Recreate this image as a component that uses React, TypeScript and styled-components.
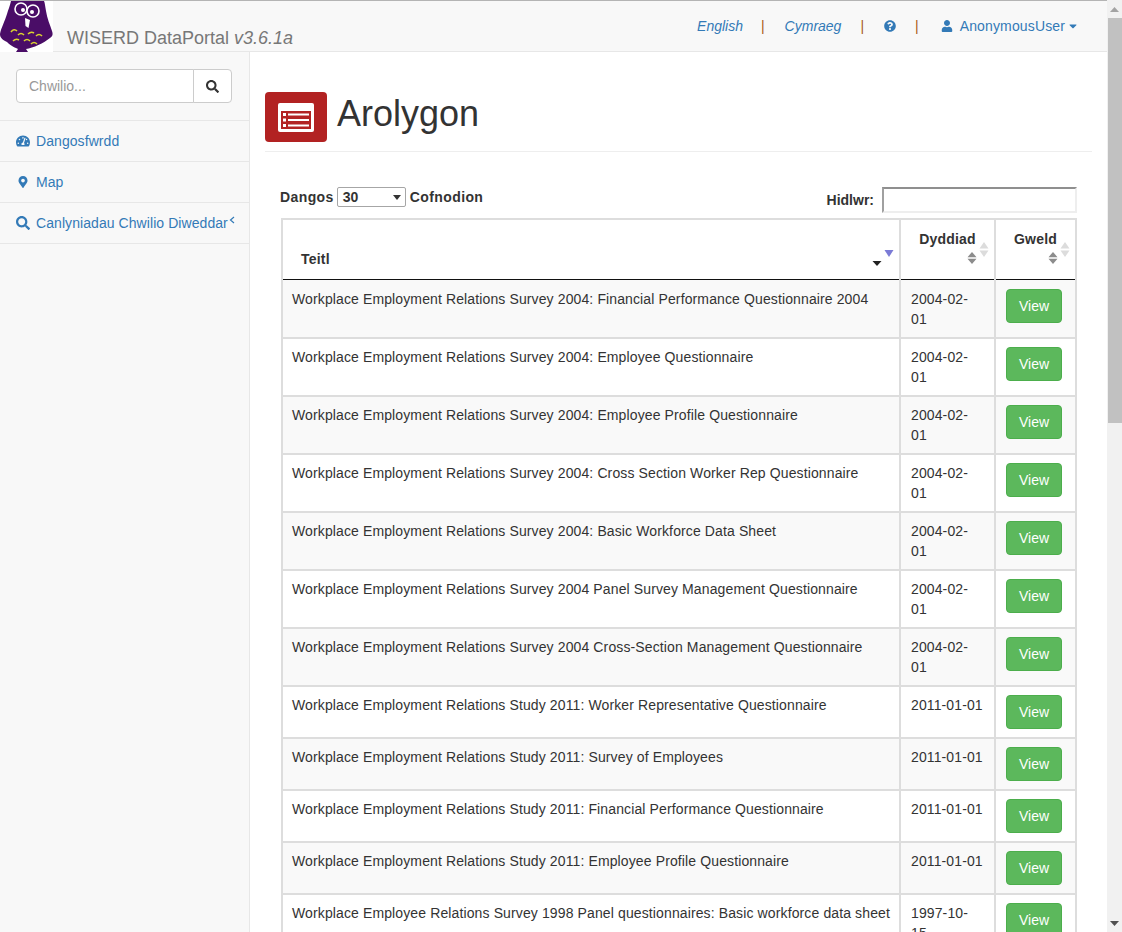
import * as React from 'react'
import styled, { createGlobalStyle } from 'styled-components'
import {
  FaCaretDown,
  FaMapMarkerAlt,
  FaQuestionCircle,
  FaSearch,
  FaTachometerAlt,
  FaUser,
} from 'react-icons/fa'

const GlobalStyle = createGlobalStyle`
  * { box-sizing: border-box; }
  html, body { margin: 0; padding: 0; height: 100%; overflow: hidden; background: #fff; }
  body {
    font-family: 'Liberation Sans', Arial, sans-serif;
    font-size: 14px;
    line-height: 20px;
    color: #333;
  }
`

const Viewport = styled.div`
  display: flex;
  height: 932px;
  width: 1122px;
  overflow: hidden;
`

const Page = styled.div`
  flex: 1;
  min-width: 0;
  display: flex;
  flex-direction: column;
`

const Navbar = styled.header`
  flex: none;
  display: flex;
  align-items: flex-start;
  height: 52px;
  background: #f8f8f8;
  border-top: 1px solid #b4b4b4;
  border-bottom: 1px solid #e7e7e7;
`

const Brand = styled.div`
  display: flex;
  align-items: flex-start;
`

const BrandTitle = styled.span`
  margin: 27px 0 0 14px;
  font-size: 18px;
  line-height: 20px;
  color: #777;

  em {
    font-style: italic;
  }
`

const NavLinks = styled.nav`
  margin-left: auto;
  display: flex;
  align-items: center;
  height: 50px;
  padding-right: 28px;
  color: #337ab7;
`

const LangLink = styled.a`
  font-style: italic;
  color: #337ab7;
`

const Divider = styled.span`
  margin: ${props => props.$margin};
  color: #a85a1a;
`

const HelpIcon = styled(FaQuestionCircle)`
  width: 12px;
  height: 12px;
`

const UserLink = styled.a`
  display: flex;
  align-items: center;
  gap: 7px;
  color: #337ab7;
  letter-spacing: 0.14px;

  svg:last-child {
    margin-left: -5px;
  }
`

const Body = styled.div`
  flex: 1;
  min-height: 0;
  display: flex;
`

const Sidebar = styled.aside`
  flex: none;
  width: 250px;
  background: #f8f8f8;
  border-right: 1px solid #e7e7e7;
`

const SearchBox = styled.div`
  display: flex;
  height: 69px;
  padding: 17px 17px 18px 16px;
  border-bottom: 1px solid #e7e7e7;
`

const SearchInput = styled.div`
  flex: 1;
  height: 34px;
  padding: 6px 12px;
  background: #fff;
  border: 1px solid #ccc;
  border-radius: 4px 0 0 4px;
  color: #999;
`

const SearchButton = styled.div`
  flex: none;
  display: flex;
  align-items: center;
  justify-content: center;
  width: 39px;
  height: 34px;
  margin-left: -1px;
  background: #fff;
  border: 1px solid #ccc;
  border-radius: 0 4px 4px 0;
  color: #333;

  svg {
    width: 13px;
    height: 13px;
  }
`

const SideItem = styled.a`
  display: flex;
  align-items: center;
  height: 41px;
  padding-left: 16px;
  border-bottom: 1px solid #e7e7e7;
  color: #337ab7;
  white-space: nowrap;
  letter-spacing: 0.07px;
`

const SideIcon = styled.span`
  flex: none;
  display: flex;
  justify-content: center;
  width: 14px;
  margin-right: 6px;

  svg {
    width: ${props => props.$size || 14}px;
    height: ${props => props.$size || 14}px;
  }
`

const Chevron = styled.svg`
  flex: none;
  align-self: flex-start;
  width: 6px;
  height: 8px;
  margin: 13px 0 0 1px;
`

const Main = styled.main`
  flex: 1;
  min-width: 0;
  padding: 40px 15px 0 15px;
`

const PageHeader = styled.div`
  display: flex;
  align-items: flex-start;
  height: 60px;
  border-bottom: 1px solid #eee;
`

const HeaderIcon = styled.div`
  flex: none;
  display: flex;
  align-items: center;
  justify-content: center;
  width: 62px;
  height: 50px;
  background: #b22222;
  border-radius: 4px;
`

const PageTitle = styled.h1`
  margin: 0 0 0 10px;
  font-size: 36px;
  font-weight: 500;
  line-height: 44px;
  color: #333;
`

const TableControls = styled.div`
  display: flex;
  align-items: flex-end;
  justify-content: space-between;
  height: 66px;
  margin: 0 15px 0 15px;
  padding-bottom: 5px;
  font-weight: bold;
  letter-spacing: 0.4px;
`

const LengthControl = styled.label`
  display: flex;
  align-items: center;
  gap: 4px;
  margin-bottom: 6px;
`

const LengthSelect = styled.span`
  display: flex;
  align-items: center;
  justify-content: space-between;
  width: 69px;
  height: 20px;
  margin-left: -1px;
  padding: 0 4px 0 5px;
  background: #fff;
  border: 1px solid #a6a6a6;
  border-radius: 2px;
  letter-spacing: 0;
`

const SelectArrow = styled.svg`
  width: 8px;
  height: 5px;
`

const FilterControl = styled.label`
  display: flex;
  align-items: center;
  gap: 8px;
  letter-spacing: 0;
`

const FilterInput = styled.span`
  display: block;
  width: 195px;
  height: 26px;
  background: #fff;
  border: 2px solid;
  border-color: #8f8f8f #eee #eee #a0a0a0;
`

const TableWrap = styled.div`
  margin: 0 15px 0 16px;
`

const DataTable = styled.table`
  width: 795px;
  border-collapse: collapse;
  table-layout: fixed;
  border-top: 2px solid #ddd;
`

const HeadCell = styled.th`
  position: relative;
  height: 60px;
  padding: ${props => (props.$bottom ? '8px 10px 10px 18px' : '9px 10px 0')};
  border: 2px solid #ddd;
  border-bottom: 1px solid #111;
  vertical-align: ${props => (props.$bottom ? 'bottom' : 'top')};
  text-align: ${props => (props.$bottom ? 'left' : 'center')};
  font-weight: bold;
  letter-spacing: 0.2px;
  color: #333;
`

const SortMark = styled.svg`
  position: absolute;
  right: ${props => props.$right}px;
  top: ${props => props.$top}px;
  width: 10px;
  height: ${props => props.$height}px;
`

const Row = styled.tr`
  background: ${props => (props.$striped ? '#f9f9f9' : '#fff')};

  &:first-child td {
    border-top: 1px solid #111;
    padding-top: 9px;
  }
`

const Cell = styled.td`
  padding: 8px 10px;
  border: 2px solid #ddd;
  vertical-align: top;
  line-height: 20px;
  letter-spacing: 0.12px;
  color: #333;
`

const TitleCell = styled(Cell)`
  padding-left: 9px;
  white-space: nowrap;
`

const DateCell = styled(Cell)`
  white-space: pre;
`

const ViewButton = styled.a`
  display: block;
  width: 56px;
  height: 34px;
  line-height: 32px;
  letter-spacing: 0;
  text-align: center;
  background: #5cb85c;
  border: 1px solid #4cae4c;
  border-radius: 4px;
  color: #fff;
`

const Scrollbar = styled.div`
  flex: none;
  display: flex;
  flex-direction: column;
  width: 15px;
  height: 100%;
  background: #f1f1f1;
`

const ScrollArrow = styled.div`
  flex: none;
  display: flex;
  align-items: center;
  justify-content: center;
  height: 18px;

  svg {
    width: 9px;
    height: 5px;
  }
`

const ScrollTrack = styled.div`
  flex: 1;
  min-height: 0;
`

const ScrollThumb = styled.div`
  height: 405px;
  margin-left: 1px;
  background: #c1c1c1;
`

const OwlSvg = styled.svg`
  display: block;
  background: #fff;
`

const Owl: React.FC = () => (
  <OwlSvg width="53" height="51" viewBox="0 0 53 51">
    <path
      d="M11 0 C10 5 8 9 7 13 C5 20 1 27 0 33 C0 37 3 39 7 41 C11 45 16 47 18 48 L16 51 L28 51 L26 48 C33 47 44 42 50 37 C53 35 53 33 52 30 C50 24 47 17 46 10 C45 5 45 2 44 0 Z"
      fill="#4a0d67"
    />
    <circle cx="21" cy="8" r="6" fill="#4a0d67" stroke="#fff" strokeWidth="1.6" />
    <circle cx="33" cy="10" r="6" fill="#4a0d67" stroke="#fff" strokeWidth="1.6" />
    <circle cx="23" cy="9" r="2" fill="#fff" />
    <circle cx="32" cy="11" r="2" fill="#fff" />
    <path d="M25 17 L30 19 L28.5 27 L25.5 25 Z" fill="#fff" />
    <g fill="none" stroke="#d9d22f" strokeWidth="1.6">
      <path d="M11 31 Q14 27 17 30" />
      <path d="M18 34 Q21 31 24 34" />
      <path d="M28 33 Q31 30 34 32" />
      <path d="M36 35 Q39 32 42 35" />
      <path d="M13 40 Q16 37 19 39" />
      <path d="M24 40 Q27 37 30 40" />
      <path d="M31 43 Q34 40 37 43" />
    </g>
  </OwlSvg>
)

const ListAlt: React.FC = () => (
  <svg width="36" height="29" viewBox="0 0 36 29">
    <rect width="36" height="29" rx="2" fill="#fff" />
    <rect x="3" y="8" width="30" height="18" fill="#b22222" />
    <g fill="#fff">
      <rect x="5" y="10" width="3" height="3" />
      <rect x="5" y="15.5" width="3" height="3" />
      <rect x="5" y="21" width="3" height="3" />
      <rect x="10" y="10.5" width="21" height="2" />
      <rect x="10" y="16" width="21" height="2" />
      <rect x="10" y="21.5" width="21" height="2" />
    </g>
  </svg>
)

const SortBoth: React.FC<{ right: number; top: number; height: number; color: string }> = ({
  right,
  top,
  height,
  color,
}) => (
  <SortMark $right={right} $top={top} $height={height} viewBox="0 0 10 14" preserveAspectRatio="none">
    <path d="M5 0 L9.5 6 L0.5 6 Z M0.5 8 L9.5 8 L5 14 Z" fill={color} />
  </SortMark>
)

const rows: [string, string][] = [
  ['Workplace Employment Relations Survey 2004: Financial Performance Questionnaire 2004', '2004-02-\n01'],
  ['Workplace Employment Relations Survey 2004: Employee Questionnaire', '2004-02-\n01'],
  ['Workplace Employment Relations Survey 2004: Employee Profile Questionnaire', '2004-02-\n01'],
  ['Workplace Employment Relations Survey 2004: Cross Section Worker Rep Questionnaire', '2004-02-\n01'],
  ['Workplace Employment Relations Survey 2004: Basic Workforce Data Sheet', '2004-02-\n01'],
  ['Workplace Employment Relations Survey 2004 Panel Survey Management Questionnaire', '2004-02-\n01'],
  ['Workplace Employment Relations Survey 2004 Cross-Section Management Questionnaire', '2004-02-\n01'],
  ['Workplace Employment Relations Study 2011: Worker Representative Questionnaire', '2011-01-01'],
  ['Workplace Employment Relations Study 2011: Survey of Employees', '2011-01-01'],
  ['Workplace Employment Relations Study 2011: Financial Performance Questionnaire', '2011-01-01'],
  ['Workplace Employment Relations Study 2011: Employee Profile Questionnaire', '2011-01-01'],
  ['Workplace Employee Relations Survey 1998 Panel questionnaires: Basic workforce data sheet', '1997-10-\n15'],
]

const App: React.FC = () => (
  <Viewport>
    <GlobalStyle />
    <Page>
      <Navbar>
        <Brand>
          <Owl />
          <BrandTitle>
            WISERD DataPortal <em>v3.6.1a</em>
          </BrandTitle>
        </Brand>
        <NavLinks>
          <LangLink>English</LangLink>
          <Divider $margin="0 20px 0 18px">|</Divider>
          <LangLink>Cymraeg</LangLink>
          <Divider $margin="0 20px 0 19px">|</Divider>
          <HelpIcon />
          <Divider $margin="0 22px 0 19px">|</Divider>
          <UserLink>
            <FaUser size={12} />
            AnonymousUser
            <FaCaretDown size={12} />
          </UserLink>
        </NavLinks>
      </Navbar>
      <Body>
        <Sidebar>
          <SearchBox>
            <SearchInput>Chwilio...</SearchInput>
            <SearchButton>
              <FaSearch />
            </SearchButton>
          </SearchBox>
          <SideItem>
            <SideIcon>
              <FaTachometerAlt />
            </SideIcon>
            Dangosfwrdd
          </SideItem>
          <SideItem>
            <SideIcon $size={12}>
              <FaMapMarkerAlt />
            </SideIcon>
            Map
          </SideItem>
          <SideItem>
            <SideIcon>
              <FaSearch />
            </SideIcon>
            Canlyniadau Chwilio Diweddar
            <Chevron viewBox="0 0 6 8">
              <path d="M5 1 L1.5 4 L5 7" fill="none" stroke="#337ab7" strokeWidth="1.2" />
            </Chevron>
          </SideItem>
        </Sidebar>
        <Main>
          <PageHeader>
            <HeaderIcon>
              <ListAlt />
            </HeaderIcon>
            <PageTitle>Arolygon</PageTitle>
          </PageHeader>
          <TableControls>
            <LengthControl>
              Dangos
              <LengthSelect>
                30
                <SelectArrow viewBox="0 0 8 5">
                  <path d="M0 0 L8 0 L4 5 Z" fill="#333" />
                </SelectArrow>
              </LengthSelect>
              Cofnodion
            </LengthControl>
            <FilterControl>
              Hidlwr:
              <FilterInput />
            </FilterControl>
          </TableControls>
          <TableWrap>
            <DataTable>
              <colgroup>
                <col width="618" />
                <col width="95" />
                <col width="81" />
              </colgroup>
              <thead>
                <tr>
                  <HeadCell $bottom>
                    Teitl
                    <SortMark $right={17} $top={37} $height={14} viewBox="0 0 10 14">
                      <path d="M0.5 4 L9.5 4 L5 9 Z" fill="#222" />
                    </SortMark>
                    <SortMark $right={5} $top={28} $height={14} viewBox="0 0 10 14">
                      <path d="M0.5 2 L9.5 2 L5 9 Z" fill="#7b7bd6" />
                    </SortMark>
                  </HeadCell>
                  <HeadCell>
                    Dyddiad
                    <SortBoth right={17} top={32} height={12} color="#8c8c8c" />
                    <SortBoth right={5} top={22} height={15} color="#dcdcdc" />
                  </HeadCell>
                  <HeadCell>
                    Gweld
                    <SortBoth right={17} top={32} height={12} color="#8c8c8c" />
                    <SortBoth right={5} top={22} height={15} color="#dcdcdc" />
                  </HeadCell>
                </tr>
              </thead>
              <tbody>
                {rows.map(([title, date], i) => (
                  <Row key={title} $striped={i % 2 === 0}>
                    <TitleCell>{title}</TitleCell>
                    <DateCell>{date}</DateCell>
                    <Cell>
                      <ViewButton>View</ViewButton>
                    </Cell>
                  </Row>
                ))}
              </tbody>
            </DataTable>
          </TableWrap>
        </Main>
      </Body>
    </Page>
    <Scrollbar>
      <ScrollArrow>
        <svg viewBox="0 0 9 5">
          <path d="M4.5 0 L9 5 L0 5 Z" fill="#a3a3a3" />
        </svg>
      </ScrollArrow>
      <ScrollTrack>
        <ScrollThumb />
      </ScrollTrack>
      <ScrollArrow>
        <svg viewBox="0 0 9 5">
          <path d="M0 0 L9 0 L4.5 5 Z" fill="#505050" />
        </svg>
      </ScrollArrow>
    </Scrollbar>
  </Viewport>
)

export default App
